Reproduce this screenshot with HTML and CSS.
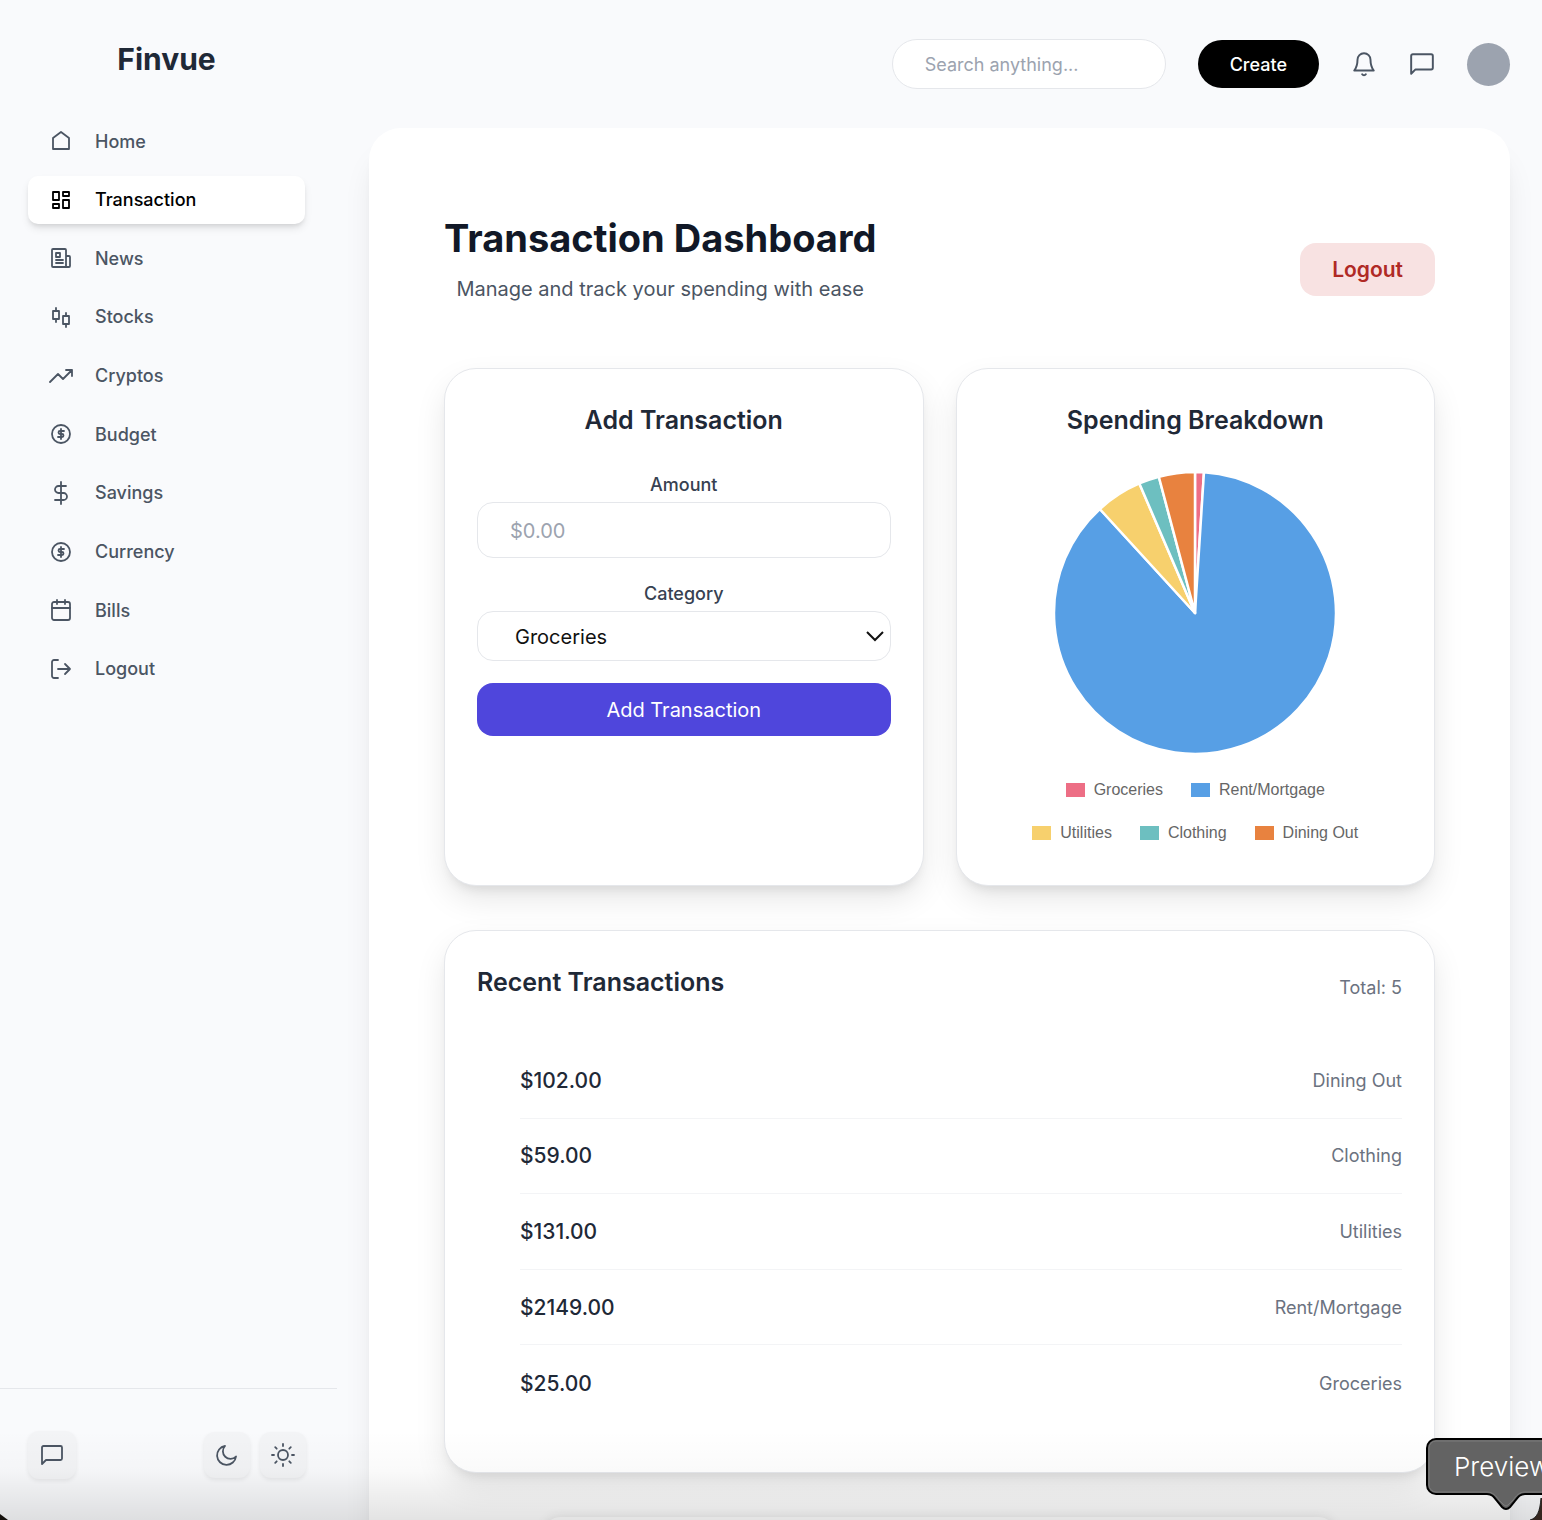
FILE: index.html
```html
<!DOCTYPE html>
<html lang="en">
<head>
<meta charset="utf-8">
<meta name="viewport" content="width=device-width, initial-scale=1">
<title>Finvue - Transaction Dashboard</title>
<link rel="stylesheet" href="styles.css">
</head>
<body>
<svg class="sprite" aria-hidden="true">
  <symbol id="chat" viewBox="0 0 24 24"><path d="M22 15.500a1.500 1.500 0 0 1-1.500 1.500H6l-4 4V4.500A1.500 1.500 0 0 1 3.500 3h17A1.500 1.500 0 0 1 22 4.500z"/></symbol>
  <symbol id="coin" viewBox="0 0 24 24"><circle cx="12" cy="12" r="9"/><path d="M15 9h-4a1.500 1.500 0 0 0 0 3h2a1.500 1.500 0 0 1 0 3H9M12 7v10"/></symbol>
</svg>
<div class="app">
  <aside class="sidebar">
    <div class="brand">Finvue</div>
    <nav class="nav">
      <a href="#"><svg class="icon" viewBox="0 0 24 24"><path d="M4 20V9l8-6 8 6v11z"/></svg>Home</a>
      <a href="#" class="active" aria-current="page"><svg class="icon" viewBox="0 0 24 24"><path d="M4 4h6v8H4zM4 16h6v4H4zM14 4h6v4h-6zM14 12h6v8h-6z"/></svg>Transaction</a>
      <a href="#"><svg class="icon" viewBox="0 0 24 24"><path d="M17 21H4a1 1 0 0 1-1-1V4a1 1 0 0 1 1-1h12a1 1 0 0 1 1 1zM17 10h3a1 1 0 0 1 1 1v9a1 1 0 0 1-1 1h-3M7 7h4v4H7zM7 14h7M7 17h7"/></svg>News</a>
      <a href="#"><svg class="icon" viewBox="0 0 24 24"><path d="M4 6h6v8H4zM7 3v3M7 14v3M14 11h6v8h-6zM17 8v3M17 19v3"/></svg>Stocks</a>
      <a href="#"><svg class="icon" viewBox="0 0 24 24"><path d="M1 18l8-8 5 5 9-9M17 6h6v6"/></svg>Cryptos</a>
      <a href="#"><svg class="icon"><use href="#coin"/></svg>Budget</a>
      <a href="#"><svg class="icon" viewBox="0 0 24 24"><path d="M12 1v22M17 5H9.500a3.500 3.500 0 0 0 0 7h5a3.500 3.500 0 0 1 0 7H6"/></svg>Savings</a>
      <a href="#"><svg class="icon"><use href="#coin"/></svg>Currency</a>
      <a href="#"><svg class="icon" viewBox="0 0 24 24"><rect x="3" y="4" width="18" height="18" rx="2"/><path d="M3 10h18M8 2v4M16 2v4"/></svg>Bills</a>
      <a href="#"><svg class="icon" viewBox="0 0 24 24"><path d="M9 21H5a2 2 0 0 1-2-2V5a2 2 0 0 1 2-2h4M16 17l5-5-5-5M21 12H9"/></svg>Logout</a>
    </nav>
    <div class="tools">
      <button class="tool tool-chat" aria-label="Messages"><svg class="icon"><use href="#chat"/></svg></button>
      <button class="tool" aria-label="Dark mode"><svg class="icon" viewBox="0 0 24 24"><path d="M10 3a7 7 0 0 0 11 10.500A9.500 9.500 0 1 1 10 3z"/></svg></button>
      <button class="tool" aria-label="Light mode"><svg class="icon" viewBox="0 0 24 24"><circle cx="12" cy="12" r="5"/><path d="M12 1v2M12 21v2M4.200 4.200l1.500 1.500M18.300 18.300l1.500 1.500M1 12h2M21 12h2M4.200 19.800l1.500-1.500M18.300 5.700l1.500-1.500"/></svg></button>
    </div>
  </aside>

  <div class="content">
    <header class="topbar">
      <input class="search" type="search" placeholder="Search anything..." aria-label="Search">
      <button class="create">Create</button>
      <button class="plain" aria-label="Notifications"><svg class="icon" viewBox="0 0 24 24"><path d="M18 8A6 6 0 0 0 6 8c0 6-1.500 8-3 10h18c-1.500-2-3-4-3-10M13.700 21.500a2 2 0 0 1-3.400 0"/></svg></button>
      <button class="plain" aria-label="Messages"><svg class="icon"><use href="#chat"/></svg></button>
      <div class="avatar"></div>
    </header>

    <main class="panel">
      <div class="heading">
        <div class="heading-text">
          <h1>Transaction Dashboard</h1>
          <p>Manage and track your spending with ease</p>
        </div>
        <button class="logout">Logout</button>
      </div>

      <div class="cards">
        <section class="card">
          <h2>Add Transaction</h2>
          <form class="form">
            <label for="amount">Amount</label>
            <input id="amount" type="text" placeholder="$0.00">
            <label for="category">Category</label>
            <div class="select">
              <select id="category"><option>Groceries</option><option>Rent/Mortgage</option><option>Utilities</option><option>Clothing</option><option>Dining Out</option></select>
              <svg class="chevron" viewBox="0 0 18 12"><path d="M1 2l8 8 8-8"/></svg>
            </div>
            <button type="button">Add Transaction</button>
          </form>
        </section>

        <section class="card">
          <h2>Spending Breakdown</h2>
          <svg class="pie" viewBox="-141 -141 282 282" role="img" aria-label="Spending by category">
            <path fill="#ed6e85" d="M0 0V-141A141 141 0 0 1 8.970 -140.710Z"/>
            <path fill="#579fe5" d="M0 0L8.970 -140.710A141 141 0 1 1 -95.190 -104.020Z"/>
            <path fill="#f7d06d" d="M0 0L-95.190 -104.020A141 141 0 0 1 -55.640 -129.560Z"/>
            <path fill="#6dbfc0" d="M0 0L-55.640 -129.560A141 141 0 0 1 -36.170 -136.280Z"/>
            <path fill="#e8823f" d="M0 0L-36.170 -136.280A141 141 0 0 1 0 -141Z"/>
          </svg>
          <ul class="legend">
            <li><i class="groceries"></i>Groceries</li>
            <li><i class="rent"></i>Rent/Mortgage</li>
            <li><i class="utilities"></i>Utilities</li>
            <li><i class="clothing"></i>Clothing</li>
            <li><i class="dining"></i>Dining Out</li>
          </ul>
        </section>
      </div>

      <section class="card recent">
        <div class="recent-head"><h2>Recent Transactions</h2><span>Total: 5</span></div>
        <ul class="rows">
          <li><strong>$102.00</strong><span>Dining Out</span></li>
          <li><strong>$59.00</strong><span>Clothing</span></li>
          <li><strong>$131.00</strong><span>Utilities</span></li>
          <li><strong>$2149.00</strong><span>Rent/Mortgage</span></li>
          <li><strong>$25.00</strong><span>Groceries</span></li>
        </ul>
      </section>
      <div class="next"></div>
    </main>
  </div>
</div>
<div class="shade"></div>
<div class="corner corner-left"></div>
<svg class="corner corner-right" viewBox="0 0 14 22"><path class="corner-fill" d="M14 0V22H2C9 20 12 14 13 0z"/><path class="corner-line" d="M13 0C12 14 9 20 2 22"/></svg>
<div class="tooltip"><svg viewBox="0 0 160 74"><path class="bubble" d="M10 1H150a9 9 0 0 1 9 9V47a9 9 0 0 1-9 9H99c-5 0-7 3-10 7l-5 6q-4 4-8 0l-5-6c-3-4-5-7-10-7H10a9 9 0 0 1-9-9V10a9 9 0 0 1 9-9z"/><path class="bubble-rim" d="M10 3H150a7 7 0 0 1 7 7V47a7 7 0 0 1-7 7H99c-6 0-9 4-12 8l-5 5q-2 2-4 0l-5-5c-3-4-6-8-12-8H10a7 7 0 0 1-7-7V10a7 7 0 0 1 7-7z"/></svg><span>Preview</span></div>
</body>
</html>
```
FILE: styles.css
```css
* { box-sizing: border-box; }
body {
  margin: 0;
  height: 100vh;
  overflow: hidden;
  position: relative;
  background: #f9fafc;
  color: #1f2937;
  font-family: Inter, "Liberation Sans", sans-serif;
}
button, input, select { font: inherit; color: inherit; }
button { border: 0; cursor: pointer; }
h1, h2, p, ul { margin: 0; padding: 0; }
ul { list-style: none; }
.sprite { position: absolute; width: 0; height: 0; }
.icon {
  width: 24px;
  height: 24px;
  flex: none;
  fill: none;
  stroke: currentColor;
  stroke-width: 1.8;
  stroke-linecap: round;
  stroke-linejoin: round;
}

.app { display: flex; height: 100%; overflow: hidden; }
.sidebar {
  width: 337px;
  flex: none;
  display: flex;
  flex-direction: column;
}
.brand {
  padding: 39px 4px 0 0;
  text-align: center;
  font-size: 30px;
  line-height: 40px;
  font-weight: 700;
}
.nav {
  margin: 38px 32px 0 28px;
  height: 576px;
  display: flex;
  flex-direction: column;
  justify-content: space-between;
}
.nav a {
  height: 48px;
  padding: 0 21px;
  display: flex;
  align-items: center;
  gap: 22px;
  border-radius: 10px;
  color: #4b5563;
  font-size: 18px;
  font-weight: 500;
  text-decoration: none;
}
.nav .active {
  background: #fff;
  color: #000;
  box-shadow: 0 5px 8px -1px rgba(0, 0, 0, .1), 0 3px 5px -2px rgba(0, 0, 0, .1);
}
.tools {
  margin-top: auto;
  height: 132px;
  padding: 0 31px 0 28px;
  border-top: 1px solid #e5e7eb;
  display: flex;
  align-items: center;
  gap: 10px;
}
.tool {
  width: 46px;
  height: 46px;
  padding: 0;
  display: grid;
  place-items: center;
  border-radius: 11px;
  background: #f3f4f6;
  color: #4b5563;
  box-shadow: 0 2px 4px rgba(0, 0, 0, .07);
}
.tool-chat { width: 48px; height: 48px; margin-right: auto; }

.content { flex: 1; min-width: 0; padding: 0 32px; }
.topbar {
  height: 128px;
  display: flex;
  align-items: center;
  justify-content: flex-end;
  gap: 32px;
}
.search {
  width: 274px;
  height: 50px;
  padding: 0 32px;
  border: 1px solid #e5e7eb;
  border-radius: 25px;
  background: #fff;
  font-size: 18px;
  appearance: none;
}
::placeholder { color: #9ca3af; opacity: 1; }
.create {
  height: 48px;
  padding: 0 32px;
  border-radius: 24px;
  background: #000;
  color: #fff;
  font-size: 18px;
  font-weight: 500;
}
.plain { padding: 0; background: none; color: #4b5563; display: flex; }
.plain .icon { width: 26px; height: 26px; }
.avatar { width: 43px; height: 43px; border-radius: 50%; background: #9ca3af; }

.panel {
  padding: 85px 75px 0;
  border-radius: 32px;
  background: #fff;
  box-shadow: 0 27px 33px -7px rgba(0, 0, 0, .1), 0 11px 13px -8px rgba(0, 0, 0, .1);
}
.heading {
  display: flex;
  justify-content: space-between;
  align-items: center;
  margin-bottom: 55px;
}
.heading-text { height: 100px; padding-top: 1px; text-align: center; }
h1 { font-size: 38px; line-height: 48px; font-weight: 700; color: #111827; }
.heading p { margin-top: 11px; font-size: 20px; line-height: 32px; color: #4b5563; }
.logout {
  height: 53px;
  margin-top: 13px;
  padding: 0 32px;
  border-radius: 16px;
  background: #f8e2e2;
  color: #b02a25;
  font-size: 21px;
  font-weight: 600;
}

.cards { display: grid; grid-template-columns: 1fr 1fr; gap: 32px; }
.card {
  padding: 32px;
  border: 1px solid #e5e7eb;
  border-radius: 32px;
  background: #fff;
  box-shadow: 0 14px 32px -2px rgba(0, 0, 0, .1), 0 8px 12px -6px rgba(0, 0, 0, .1);
}
.cards .card { height: 518px; text-align: center; }
h2 { font-size: 25px; line-height: 38px; font-weight: 600; }
.form { display: flex; flex-direction: column; margin-top: 30px; }
.form label {
  padding-top: 2px;
  margin-bottom: 3px;
  font-size: 18px;
  line-height: 28px;
  font-weight: 500;
  color: #374151;
}
.form input, .form select {
  width: 100%;
  border: 1px solid #e5e7eb;
  border-radius: 16px;
  background: #fff;
  font-size: 20px;
}
.form input { height: 56px; padding: 1px 32px 0; margin-bottom: 20px; }
.select { position: relative; margin-bottom: 22px; }
.form select { display: block; height: 50px; padding: 2px 37px 0; appearance: none; color: #111; }
.chevron {
  position: absolute;
  right: 7px;
  top: 19px;
  width: 18px;
  height: 12px;
  fill: none;
  stroke: #111;
  stroke-width: 2;
  pointer-events: none;
}
.form button {
  height: 53px;
  border-radius: 16px;
  background: #4f46dc;
  color: #fff;
  font-size: 20px;
}

.pie { display: block; width: 282px; height: 282px; margin: 33px auto 0; }
.pie path { stroke: #fff; stroke-width: 2.500; stroke-linejoin: round; }
.legend {
  display: flex;
  flex-wrap: wrap;
  justify-content: center;
  gap: 23px 28px;
  margin-top: 26px;
  padding: 0 32px;
  color: #666;
  font: 16px/20px "Liberation Sans", Arial, sans-serif;
}
.legend li { display: flex; align-items: center; gap: 9px; }
.legend i { width: 19px; height: 14px; }
.groceries { background: #ed6e85; }
.rent { background: #579fe5; }
.utilities { background: #f7d06d; }
.clothing { background: #6dbfc0; }
.dining { background: #e8823f; }

.recent { margin-top: 44px; height: 543px; }
.recent-head { display: flex; justify-content: space-between; }
.recent-head span { padding-top: 10px; font-size: 18px; line-height: 30px; color: #6b7280; }
.rows {
  height: 378px;
  margin: 40px 0 0 43px;
  display: grid;
  grid-auto-rows: 1fr;
}
.rows li {
  display: flex;
  align-items: center;
  justify-content: space-between;
  border-bottom: 1px solid #f3f4f6;
}
.rows li:last-child { border: 0; }
.rows strong { font-size: 21px; font-weight: 500; }
.rows span { font-size: 18px; color: #6b7280; }
.next {
  height: 400px;
  margin: 44px 100px 0;
  border-radius: 16px;
  background: #fff;
  box-shadow: 0 0 12px rgba(0, 0, 0, .1);
}

.shade {
  position: absolute;
  inset: auto 0 0;
  height: 90px;
  background: linear-gradient(rgba(0, 0, 0, 0), rgba(0, 0, 0, .02) 45%, rgba(0, 0, 0, .11));
  pointer-events: none;
}
.corner { position: absolute; bottom: 0; }
.corner-left { left: 0; width: 8px; height: 6px; background: #14100c; clip-path: polygon(0 0, 100% 100%, 0 100%); }
.corner-right { right: 0; width: 14px; height: 22px; }
.corner-fill { fill: #35261f; }
.corner-line { fill: none; stroke: #222; stroke-width: 1; }
.tooltip {
  position: absolute;
  right: -44px;
  bottom: 8px;
  width: 160px;
  height: 74px;
}
.tooltip svg { position: absolute; inset: 0; }
.bubble { fill: #636363; stroke: #000; stroke-width: 2; }
.bubble-rim { fill: none; stroke: #7c7c7c; stroke-width: 1; }
.tooltip span {
  position: relative;
  display: block;
  padding-left: 28px;
  color: #fff;
  font-size: 26px;
  line-height: 58px;
  font-weight: 300;
}
```
